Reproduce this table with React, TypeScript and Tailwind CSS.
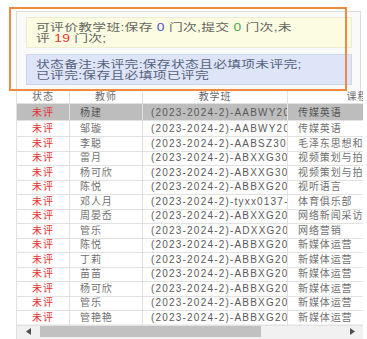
const rows = [
  { teacher: '杨建', cls: '(2023-2024-2)-AABWY2001', course: '传媒英语' },
  { teacher: '邹璇', cls: '(2023-2024-2)-AABWY2001', course: '传媒英语' },
  { teacher: '李聪', cls: '(2023-2024-2)-AABSZ30001', course: '毛泽东思想和中国特色社会主义理论' },
  { teacher: '雷月', cls: '(2023-2024-2)-ABXXG30012', course: '视频策划与拍摄' },
  { teacher: '杨可欣', cls: '(2023-2024-2)-ABXXG30012', course: '视频策划与拍摄' },
  { teacher: '陈悦', cls: '(2023-2024-2)-ABBXG20015', course: '视听语言' },
  { teacher: '邓人月', cls: '(2023-2024-2)-tyxx0137-24', course: '体育俱乐部' },
  { teacher: '周晏岙', cls: '(2023-2024-2)-ABXXG20021', course: '网络新闻采访与写作' },
  { teacher: '管乐', cls: '(2023-2024-2)-ADXXG20011', course: '网络营销' },
  { teacher: '陈悦', cls: '(2023-2024-2)-ABBXG20401', course: '新媒体运营' },
  { teacher: '丁莉', cls: '(2023-2024-2)-ABBXG20401', course: '新媒体运营' },
  { teacher: '苗苗', cls: '(2023-2024-2)-ABBXG20401', course: '新媒体运营' },
  { teacher: '杨可欣', cls: '(2023-2024-2)-ABBXG20401', course: '新媒体运营' },
  { teacher: '管乐', cls: '(2023-2024-2)-ABBXG20401', course: '新媒体运营' },
  { teacher: '管艳艳', cls: '(2023-2024-2)-ABBXG20401', course: '新媒体运营' },
];

export default function App() {
  return (
    <div className="relative w-[367px] h-[339px] overflow-hidden bg-white font-['Liberation_Sans','Noto_Sans_CJK_SC',sans-serif]">
      <div className="pl-[16px] pt-[11px]">
        {/* notice panel */}
        <div className="w-[345px] border border-b-0 border-[#dcdcdc] bg-[#fafafa] pl-[9px] pr-[8px] pt-[5px] pb-[6px] flex flex-col gap-[6px]">
          <div className="h-[31px] border border-[#ececcf] bg-[#fcfce3] pl-[9px] flex items-center overflow-hidden">
            <div className="origin-left scale-x-[1.38] text-[10px] leading-[11px] tracking-[0.2px] text-[#66665e] whitespace-nowrap">
              <div>
                可评价教学班:保存 <span className="text-[#4a55c8]">0</span> 门次,提交 <span className="text-[#4aa84a]">0</span> 门次,未
              </div>
              <div>
                评 <span className="text-[#e83232]">19</span> 门次;
              </div>
            </div>
          </div>
          <div className="h-[31px] border border-[#cbd5ef] bg-[#dee5f8] pl-[9px] flex items-center overflow-hidden">
            <div className="origin-left scale-x-[1.38] text-[10px] leading-[11px] tracking-[0.2px] text-[#56637e] whitespace-nowrap">
              <div>状态备注:未评完:保存状态且必填项未评完;</div>
              <div>已评完:保存且必填项已评完</div>
            </div>
          </div>
        </div>

        {/* table */}
        <div className="w-[347px] overflow-hidden border-l border-[#e2e2e2] text-[10px] tracking-[0.9px]">
          <div className="grid grid-cols-[53px_73px_145px_140px] w-[411px] h-[13px] bg-white text-[#6a6a6a] leading-[12px]">
            <div className="border-r border-b border-[#e2e2e2] text-center">状态</div>
            <div className="border-r border-b border-[#e2e2e2] text-center">教师</div>
            <div className="border-r border-b border-[#e2e2e2] text-center">教学班</div>
            <div className="border-r border-b border-[#e2e2e2] text-center">课程</div>
          </div>
          {rows.map((r, i) => (
            <div
              key={i}
              className={`grid grid-cols-[53px_73px_145px_140px] w-[411px] ${
                i === 0 ? 'h-[17px] bg-[#bdbdbd] text-[#555]' : 'h-[14.5px] bg-white text-[#707070]'
              }`}
            >
              <div className="border-r border-b border-[#e2e2e2] flex items-center justify-center text-[#e63030]">未评</div>
              <div className="border-r border-b border-[#e2e2e2] flex items-center pl-[10px] whitespace-nowrap overflow-hidden">{r.teacher}</div>
              <div className="border-r border-b border-[#e2e2e2] flex items-center pl-[8px] whitespace-nowrap overflow-hidden tracking-[1.2px] text-[#5a5a5a]">{r.cls}</div>
              <div className="border-r border-b border-[#e2e2e2] flex items-center pl-[10px] whitespace-nowrap overflow-hidden">{r.course}</div>
            </div>
          ))}
          {/* horizontal scrollbar */}
          <div className="flex h-[15px] bg-[#f1f1f1]">
            <div className="w-[23px] flex items-center justify-center">
              <svg width="5" height="7" viewBox="0 0 5 7">
                <path d="M5 0 L0 3.5 L5 7 Z" fill="#505050" />
              </svg>
            </div>
            <div className="w-[221px] my-[2px] bg-[#c1c1c1]" />
            <div className="flex-1" />
            <div className="w-[22px] flex items-center justify-center">
              <svg width="5" height="7" viewBox="0 0 5 7">
                <path d="M0 0 L5 3.5 L0 7 Z" fill="#505050" />
              </svg>
            </div>
          </div>
        </div>
      </div>

      {/* annotation frame */}
      <div className="absolute left-[9px] top-[7px] w-[338px] h-[84px] border-2 border-[#ef8a3e]" />
    </div>
  );
}
